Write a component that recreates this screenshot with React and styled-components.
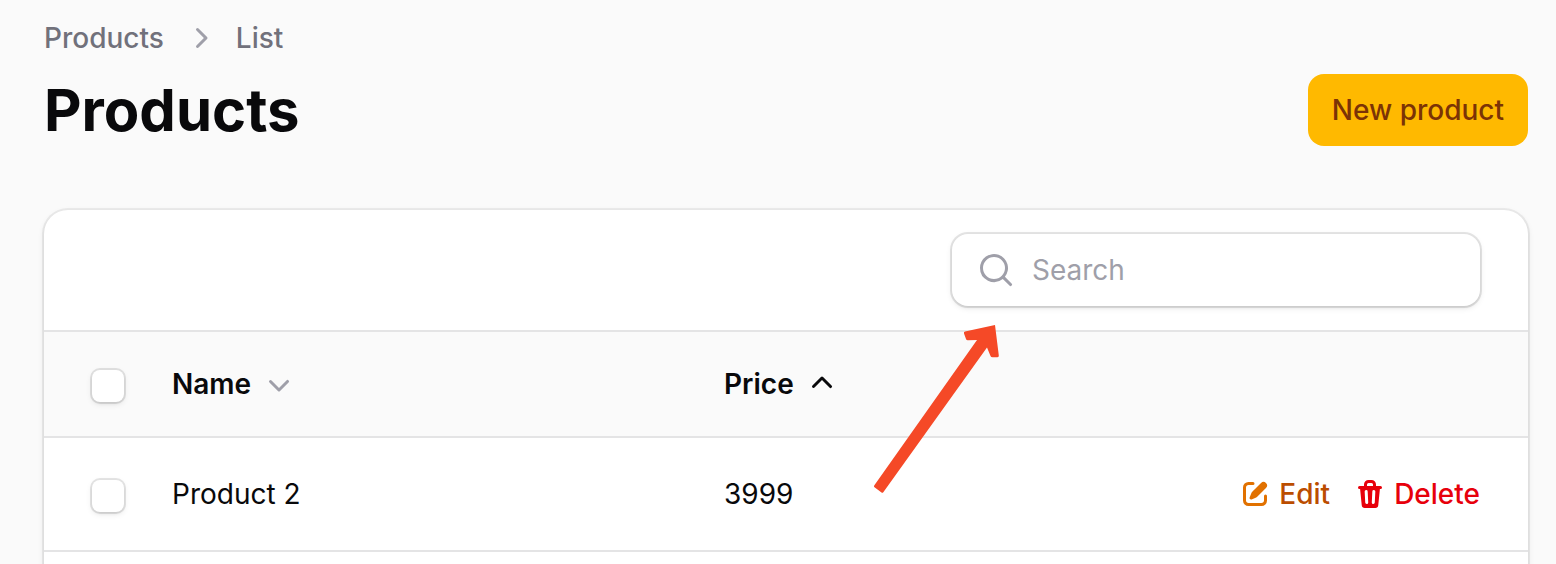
import React, { useState } from 'react'
import styled, { createGlobalStyle } from 'styled-components'

const GlobalStyle = createGlobalStyle`
  *, *::before, *::after {
    box-sizing: border-box;
  }
  body {
    margin: 0;
    background: #fafafa;
    color: #09090b;
    font-family: Inter, "Liberation Sans", sans-serif;
    font-size: 28px;
    line-height: 40px;
  }
  button, input {
    font: inherit;
    color: inherit;
  }
`

const Page = styled.main`
  display: flex;
  flex-direction: column;
  height: 100vh;
  overflow: hidden;
  padding: 18px 28px 0 44px;
`

const Breadcrumbs = styled.nav`
  display: flex;
  align-items: center;
  gap: 16px;
  color: #9f9fa9;
`

const Crumb = styled.a`
  color: #71717b;
  font-weight: 500;
  text-decoration: none;
`

const Header = styled.header`
  display: flex;
  align-items: center;
  justify-content: space-between;
  margin-top: 16px;
`

const Heading = styled.h1`
  margin: 0;
  font-size: 58px;
  line-height: 72px;
  font-weight: 700;
`

const PrimaryButton = styled.button`
  padding: 16px 24px;
  border: 0;
  border-radius: 16px;
  background: #ffb900;
  color: #7b3306;
  font-weight: 500;
  cursor: pointer;
`

const Card = styled.section`
  flex-shrink: 0;
  margin-top: 64px;
  padding-bottom: 64px;
  border-radius: 24px;
  background: #fff;
  box-shadow: 0 0 0 2px rgba(9, 9, 11, 0.06), 0 2px 6px rgba(0, 0, 0, 0.1), 0 2px 4px -2px rgba(0, 0, 0, 0.1);
`

const Toolbar = styled.div`
  display: flex;
  justify-content: flex-end;
  padding: 24px 48px;
`

const SearchField = styled.label`
  position: relative;
  display: flex;
  align-items: center;
  gap: 16px;
  width: 528px;
  height: 72px;
  padding: 0 24px;
  border-radius: 16px;
  background: #fff;
  color: #9f9fa9;
  box-shadow: 0 0 0 2px rgba(9, 9, 11, 0.1), 0 2px 6px rgba(0, 0, 0, 0.1), 0 2px 4px -2px rgba(0, 0, 0, 0.1);
`

const SearchInput = styled.input`
  flex: 1;
  min-width: 0;
  padding: 0;
  border: 0;
  outline: 0;
  background: none;
  color: #09090b;
  &::placeholder {
    color: #9f9fa9;
    opacity: 1;
  }
`

const Pointer = styled.svg`
  position: absolute;
  z-index: 1;
  top: 90px;
  left: -80px;
  fill: #f54927;
  pointer-events: none;
`

const Table = styled.table`
  width: 100%;
  table-layout: fixed;
  border-collapse: separate;
  border-spacing: 0;
  text-align: left;
`

const HeadCell = styled.th`
  width: ${({ $width }) => $width || 'auto'};
  height: 108px;
  padding: 0 24px;
  border-top: 2px solid #e4e4e5;
  border-bottom: 2px solid #e4e4e5;
  background: #fafafa;
  font-weight: 600;
`

const Cell = styled.td`
  height: 114px;
  padding: 0 24px;
  border-bottom: 2px solid #e4e4e5;
`

const SelectHeadCell = styled(HeadCell)`
  padding: 4px 0 0 48px;
`

const SelectCell = styled(Cell)`
  padding: 4px 0 0 48px;
`

const ActionCell = styled(Cell)`
  padding-right: 48px;
`

const Checkbox = styled.input`
  appearance: none;
  display: block;
  width: 32px;
  height: 32px;
  margin: 0;
  border-radius: 8px;
  background: ${({ checked }) => (checked ? '#ffb900' : '#fff')};
  box-shadow: 0 0 0 2px rgba(9, 9, 11, 0.1), 0 2px 6px rgba(0, 0, 0, 0.1), 0 2px 4px -2px rgba(0, 0, 0, 0.1);
`

const SortButton = styled.button`
  display: flex;
  align-items: center;
  gap: 8px;
  padding: 0;
  border: 0;
  background: none;
  font-weight: 600;
  cursor: pointer;
  svg {
    color: ${({ $active }) => ($active ? '#09090b' : '#9f9fa9')};
  }
`

const Actions = styled.div`
  display: flex;
  justify-content: flex-end;
  gap: 24px;
`

const ActionButton = styled.button`
  display: flex;
  align-items: center;
  gap: 8px;
  padding: 0;
  border: 0;
  background: none;
  color: ${({ $danger }) => ($danger ? '#e7000b' : '#bb4d00')};
  font-weight: 500;
  cursor: pointer;
  svg {
    color: ${({ $danger }) => ($danger ? '#e7000b' : '#e17100')};
  }
`

const icons = {
  right: 'M8.22 5.22a.75.75 0 0 1 1.06 0l4.25 4.25a.75.75 0 0 1 0 1.06l-4.25 4.25a.75.75 0 0 1-1.06-1.06L11.94 10 8.22 6.28a.75.75 0 0 1 0-1.06Z',
  down: 'M5.22 8.22a.75.75 0 0 1 1.06 0L10 11.94l3.72-3.72a.75.75 0 1 1 1.06 1.06l-4.25 4.25a.75.75 0 0 1-1.06 0L5.22 9.28a.75.75 0 0 1 0-1.06Z',
  up: 'M9.47 6.47a.75.75 0 0 1 1.06 0l4.25 4.25a.75.75 0 1 1-1.06 1.06L10 8.06l-3.72 3.72a.75.75 0 0 1-1.06-1.06l4.25-4.25Z',
  search: 'M9 3.5a5.5 5.5 0 1 0 0 11 5.5 5.5 0 0 0 0-11ZM2 9a7 7 0 1 1 12.452 4.391l3.328 3.329a.75.75 0 1 1-1.06 1.06l-3.329-3.328A7 7 0 0 1 2 9Z',
  edit: 'M13.488 2.513a1.75 1.75 0 0 0-2.475 0L6.75 6.774a2.75 2.75 0 0 0-.596.892l-.848 2.047a.75.75 0 0 0 .98.98l2.047-.848a2.75 2.75 0 0 0 .892-.596l4.261-4.262a1.75 1.75 0 0 0 0-2.474Z M4.75 3.5c-.69 0-1.25.56-1.25 1.25v6.5c0 .69.56 1.25 1.25 1.25h6.5c.69 0 1.25-.56 1.25-1.25V9A.75.75 0 0 1 14 9v2.25A2.75 2.75 0 0 1 11.25 14h-6.5A2.75 2.75 0 0 1 2 11.25v-6.5A2.75 2.75 0 0 1 4.75 2H7a.75.75 0 0 1 0 1.5H4.75Z',
  trash: 'M5 3.25V4H2.75a.75.75 0 0 0 0 1.5h.3l.815 8.15A1.5 1.5 0 0 0 5.357 15h5.285a1.5 1.5 0 0 0 1.493-1.35l.815-8.15h.3a.75.75 0 0 0 0-1.5H11v-.75A2.25 2.25 0 0 0 8.75 1h-1.5A2.25 2.25 0 0 0 5 3.25Zm2.25-.75a.75.75 0 0 0-.75.75V4h3v-.75a.75.75 0 0 0-.75-.75h-1.5ZM6.05 6a.75.75 0 0 1 .787.713l.275 5.5a.75.75 0 0 1-1.498.075l-.275-5.5A.75.75 0 0 1 6.05 6Zm3.9 0a.75.75 0 0 1 .712.787l-.275 5.5a.75.75 0 0 1-1.498-.075l.275-5.5a.75.75 0 0 1 .786-.711Z',
}

const Icon = ({ name, small }) => {
  const units = small ? 16 : 20
  return (
    <svg width={units * 2} height={units * 2} viewBox={`0 0 ${units} ${units}`} fill="currentColor" aria-hidden="true">
      <path fillRule="evenodd" clipRule="evenodd" d={icons[name]} />
    </svg>
  )
}

const products = [{ id: 2, name: 'Product 2', price: 3999 }]

const App = () => {
  const [selected, setSelected] = useState([])
  const allSelected = selected.length === products.length

  const toggle = (id) =>
    setSelected(selected.includes(id) ? selected.filter((s) => s !== id) : [...selected, id])

  return (
    <>
      <GlobalStyle />
      <Page>
        <Breadcrumbs aria-label="Breadcrumb">
          <Crumb href="#products">Products</Crumb>
          <Icon name="right" />
          <Crumb href="#list">List</Crumb>
        </Breadcrumbs>
        <Header>
          <Heading>Products</Heading>
          <PrimaryButton type="button">New product</PrimaryButton>
        </Header>

        <Card>
          <Toolbar>
            <SearchField>
              <Icon name="search" />
              <SearchInput type="text" placeholder="Search" aria-label="Search" />
              <Pointer width="128" height="170" viewBox="0 0 128 170" aria-hidden="true">
                <path d="M123 1 93 7.5Q91.5 8 92 9.5L94 15Q94.5 16.500 96 16.3L105 16 2.2 161.5Q1.5 162.5 2.5 163.2L9.5 168.5Q10.500 169.2 11.3 168.2L115 23.500 118.5 32Q119 33.3 120.5 33.3H125.5Q127 33 126.8 31.5Z" />
              </Pointer>
            </SearchField>
          </Toolbar>
          <Table>
            <thead>
              <tr>
                <SelectHeadCell $width="104px">
                  <Checkbox
                    type="checkbox"
                    aria-label="Select all"
                    checked={allSelected}
                    onChange={() => setSelected(allSelected ? [] : products.map((p) => p.id))}
                  />
                </SelectHeadCell>
                <HeadCell $width="37.2%">
                  <SortButton type="button">
                    Name <Icon name="down" />
                  </SortButton>
                </HeadCell>
                <HeadCell>
                  <SortButton type="button" $active>
                    Price <Icon name="up" />
                  </SortButton>
                </HeadCell>
                <HeadCell aria-label="Actions" />
              </tr>
            </thead>
            <tbody>
              {products.map((product) => (
                <tr key={product.id}>
                  <SelectCell>
                    <Checkbox
                      type="checkbox"
                      aria-label={`Select ${product.name}`}
                      checked={selected.includes(product.id)}
                      onChange={() => toggle(product.id)}
                    />
                  </SelectCell>
                  <Cell>{product.name}</Cell>
                  <Cell>{product.price}</Cell>
                  <ActionCell>
                    <Actions>
                      <ActionButton type="button">
                        <Icon name="edit" small /> Edit
                      </ActionButton>
                      <ActionButton type="button" $danger>
                        <Icon name="trash" small /> Delete
                      </ActionButton>
                    </Actions>
                  </ActionCell>
                </tr>
              ))}
            </tbody>
          </Table>
        </Card>
      </Page>
    </>
  )
}

export default App
